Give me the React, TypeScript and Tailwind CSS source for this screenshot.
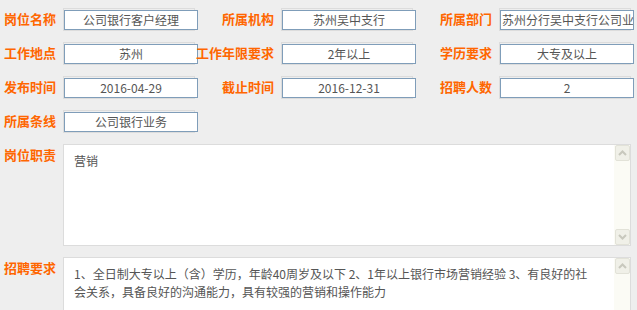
const font = "font-['Noto_Sans_CJK_SC',sans-serif]";

function Field({ label, value }: { label: string; value: string }) {
  return (
    <div className="flex w-[218px] shrink-0 items-center">
      <div className="flex w-[56px] shrink-0 justify-end">
        <span className="whitespace-nowrap text-[13px] font-bold leading-none text-[#ff6600] -mt-[2px]">{label}</span>
      </div>
      <div className="ml-[7px] h-[23px] w-[132px] shrink-0 border border-[#dcdcdc]">
        <div className="mt-px h-[20px] w-[134px] overflow-hidden whitespace-nowrap border border-[#7f9db9] bg-white px-px text-center text-[12px] leading-[17px] text-[#555]">
          {value}
        </div>
      </div>
    </div>
  );
}

function Arrow({ up }: { up?: boolean }) {
  return (
    <div className="flex h-[16px] w-[15px] items-center justify-center rounded-[2px] border border-[#e2e2d8] bg-[#f0f0e8]">
      <svg width="9" height="6" viewBox="0 0 9 6">
        <path
          d={up ? 'M1 5 L4.5 1.5 L8 5' : 'M1 1 L4.5 4.5 L8 1'}
          fill="none"
          stroke="#c8c8bd"
          strokeWidth="2"
        />
      </svg>
    </div>
  );
}

function ScrollBar() {
  return (
    <div className="flex w-[16px] shrink-0 flex-col justify-between bg-[#fbfbf5] pl-px">
      <Arrow up />
      <Arrow />
    </div>
  );
}

function Area({ label, children, h }: { label: string; children: React.ReactNode; h: string }) {
  return (
    <div className="flex">
      <div className="flex w-[56px] shrink-0 justify-end pt-[4px]">
        <span className="whitespace-nowrap text-[13px] font-bold leading-[13px] text-[#ff6600]">{label}</span>
      </div>
      <div className={`ml-[7px] flex w-[568px] shrink-0 border border-[#dcdcdc] bg-white ${h}`}>
        <div className="flex-1 pl-[10px] pt-[7px] text-[12px] leading-[18px] text-[#555]">{children}</div>
        <ScrollBar />
      </div>
    </div>
  );
}

export default function App() {
  return (
    <div className={`h-[310px] w-[637px] overflow-hidden bg-[#eeeeee] pt-[8px] ${font}`}>
      <div className="flex flex-col gap-[11px]">
        <div className="flex">
          <Field label="岗位名称" value="公司银行客户经理" />
          <Field label="所属机构" value="苏州吴中支行" />
          <Field label="所属部门" value="苏州分行吴中支行公司业务部" />
        </div>
        <div className="flex">
          <Field label="工作地点" value="苏州" />
          <Field label="工作年限要求" value="2年以上" />
          <Field label="学历要求" value="大专及以上" />
        </div>
        <div className="flex">
          <Field label="发布时间" value="2016-04-29" />
          <Field label="截止时间" value="2016-12-31" />
          <Field label="招聘人数" value="2" />
        </div>
        <div className="flex">
          <Field label="所属条线" value="公司银行业务" />
        </div>
        <Area label="岗位职责" h="h-[102px]">
          营销
        </Area>
        <Area label="招聘要求" h="h-[102px]">
          1、全日制大专以上（含）学历，年龄40周岁及以下 2、1年以上银行市场营销经验 3、有良好的社
          <br />
          会关系，具备良好的沟通能力，具有较强的营销和操作能力
        </Area>
      </div>
    </div>
  );
}
